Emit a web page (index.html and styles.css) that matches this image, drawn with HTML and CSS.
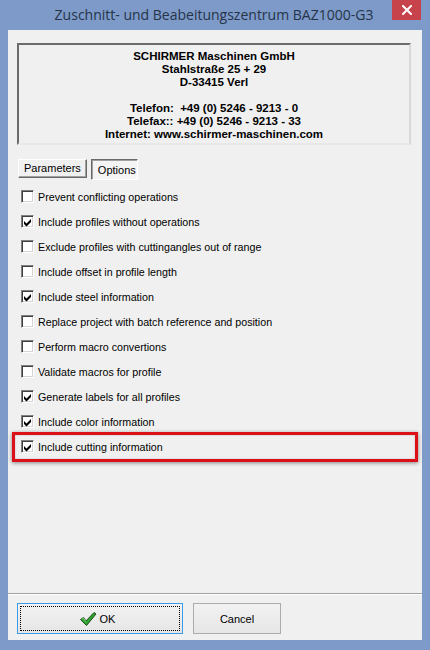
FILE: index.html
```html
<!DOCTYPE html>
<html>
<head>
<meta charset="utf-8">
<link rel="stylesheet" href="styles.css">
</head>
<body>
<div class="window">
  <div class="titlebar">
    <div class="title">Zuschnitt- und Beabeitungszentrum BAZ1000-G3</div>
    <div class="close">
      <svg width="10" height="10" viewBox="0 0 10 10"><path d="M1 1 L9 9 M9 1 L1 9" stroke="#fff" stroke-width="2" stroke-linecap="square"/></svg>
    </div>
  </div>
  <div class="client">
    <div class="infobox">
      <div>SCHIRMER Maschinen GmbH</div>
      <div>Stahlstraße 25 + 29</div>
      <div>D-33415 Verl</div>
      <div class="blank"></div>
      <div>Telefon:&nbsp; +49 (0) 5246 - 9213 - 0</div>
      <div>Telefax:: +49 (0) 5246 - 9213 - 33</div>
      <div>Internet: www.schirmer-maschinen.com</div>
    </div>
    <div class="tabs">
      <div class="tab">Parameters</div>
      <div class="tab active">Options</div>
    </div>
    <div class="options">
      <div class="row"><span class="cb"></span><span>Prevent conflicting operations</span></div>
      <div class="row"><span class="cb checked"></span><span>Include profiles without operations</span></div>
      <div class="row"><span class="cb"></span><span>Exclude profiles with cuttingangles out of range</span></div>
      <div class="row"><span class="cb"></span><span>Include offset in profile length</span></div>
      <div class="row"><span class="cb checked"></span><span>Include steel information</span></div>
      <div class="row"><span class="cb"></span><span>Replace project with batch reference and position</span></div>
      <div class="row"><span class="cb"></span><span>Perform macro convertions</span></div>
      <div class="row"><span class="cb"></span><span>Validate macros for profile</span></div>
      <div class="row"><span class="cb checked"></span><span>Generate labels for all profiles</span></div>
      <div class="row"><span class="cb checked"></span><span>Include color information</span></div>
      <div class="row highlighted"><span class="cb checked"></span><span>Include cutting information</span><span class="redbox"></span></div>
    </div>
    <div class="spacer"></div>
    <div class="footer">
      <div class="btn ok"><span class="focus"><svg class="okicon" width="18" height="16" viewBox="0 0 18 16"><path d="M1.5 8.5 L4.5 6.5 L7 10 L15 1.5 L17 3 L7.5 14.5 Z" fill="#2fa32f" stroke="#1b4d1b" stroke-width="1" stroke-linejoin="round"/><path d="M3 8 L4.5 7.5 L7 11" fill="none" stroke="#8fe08f" stroke-width="0.8"/></svg>OK</span></div>
      <div class="btn cancel">Cancel</div>
    </div>
  </div>
</div>
</body>
</html>
```
FILE: styles.css
```css
* { box-sizing: border-box; }
html, body { margin: 0; padding: 0; }
body { width: 430px; height: 650px; overflow: hidden; font-family: "Liberation Sans", Arial, sans-serif; }

.window {
  width: 430px;
  height: 650px;
  background: #7d9ac8;
  display: flex;
  flex-direction: column;
  padding: 0 8px 10px 8px;
}

.titlebar {
  height: 30px;
  display: flex;
  position: relative;
  align-items: center;
  justify-content: center;
}
.title {
  font-family: "Open Sans", "Noto Sans", sans-serif;
  font-size: 14px;
  color: #26344a;
  margin-left: -2px;
  margin-top: -1px;
}
.close {
  position: absolute;
  right: 1px;
  top: 0;
  width: 29px;
  height: 20px;
  background: #c7434b;
  display: flex;
  align-items: center;
  justify-content: center;
}

.client {
  flex: 1;
  background: #f0f0f0;
  display: flex;
  flex-direction: column;
}

.infobox {
  margin: 13px 0 0 9px;
  width: 394px;
  height: 102px;
  border-top: 2px solid #6b6b6b;
  border-left: 2px solid #6b6b6b;
  border-right: 2px solid #d8d8d8;
  border-bottom: 2px solid #e8e8e8;
  padding-top: 5px;
  text-align: center;
  font-weight: bold;
  font-size: 11.5px;
  line-height: 13px;
  color: #000;
}
.infobox .blank { height: 13px; }

.tabs {
  display: flex;
  gap: 4px;
  margin: 14px 0 0 10px;
  align-items: flex-start;
}
.tab {
  height: 19px;
  padding: 0 5px;
  font-size: 11px;
  line-height: 17px;
  color: #000;
  background: #f0f0f0;
  border-top: 1px solid #fff;
  border-left: 1px solid #fff;
  border-right: 1px solid #696969;
  border-bottom: 1px solid #696969;
  box-shadow: inset -1px -1px 0 #a0a0a0;
}
.tab.active {
  height: 21px;
  width: 47px;
  line-height: 21px;
  padding: 0 0 0 6px;
  border-top: 1px solid #696969;
  border-left: 1px solid #696969;
  border-right: 1px solid #fff;
  border-bottom: 1px solid #fff;
  box-shadow: inset 1px 1px 0 #a0a0a0;
  background: #f4f4f4;
}

.options {
  margin: 4px 0 0 13px;
  display: flex;
  flex-direction: column;
}
.row {
  height: 25px;
  display: flex;
  align-items: center;
  gap: 4px;
  font-size: 10.7px;
  color: #000;
  position: relative;
}
.cb {
  width: 13px;
  height: 13px;
  background: #fff;
  border-top: 1px solid #808080;
  border-left: 1px solid #808080;
  border-right: 1px solid #fff;
  border-bottom: 1px solid #fff;
  box-shadow: inset 1px 1px 0 #404040, inset -1px -1px 0 #d4d4d4;
  flex: none;
  position: relative;
}
.cb.checked::after {
  content: "";
  position: absolute;
  left: 0;
  top: 0;
  width: 13px;
  height: 13px;
  background: #000;
  clip-path: polygon(2px 5px, 4.5px 7.5px, 9px 3px, 9px 6px, 4.5px 10.5px, 2px 8px);
}
.redbox {
  position: absolute;
  left: -9px;
  top: -2px;
  width: 406px;
  height: 30px;
  border: 3px solid #dc1019;
  box-shadow: 0 1px 4px rgba(0,0,0,0.45), inset 0 0 2px rgba(0,0,0,0.25);
}

.spacer { flex: 1; }

.footer {
  border-top: 1px solid #a0a0a0;
  box-shadow: inset 0 1px 0 #fff;
  height: 47px;
  display: flex;
  gap: 10px;
  padding: 9px 0 0 9px;
  align-items: flex-start;
}
.btn {
  height: 31px;
  font-size: 11px;
  color: #000;
  display: flex;
  align-items: center;
  justify-content: center;
  background: linear-gradient(#f2f2f2, #e6e6e6);
  border: 1px solid #acacac;
}
.btn.ok {
  width: 166px;
  border: 1px solid #3c9be8;
  padding: 2px;
}
.btn.ok .focus {
  width: 100%;
  height: 100%;
  border: 1px dotted #000;
  display: flex;
  align-items: center;
  justify-content: center;
  gap: 3px;
  padding-right: 6px;
}
.okicon { margin-top: 1px; }
.btn.cancel { width: 88px; }
```
